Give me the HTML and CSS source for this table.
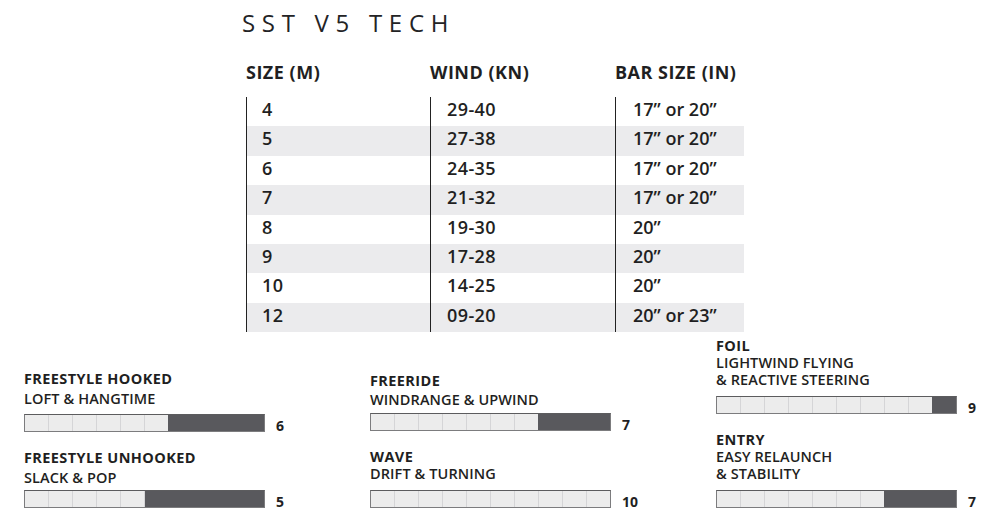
FILE: index.html
```html
<!DOCTYPE html>
<html>
<head>
<meta charset="utf-8">
<link rel="stylesheet" href="styles.css">
</head>
<body>
<div class="page">
  <h1 class="title">SST V5 TECH</h1>
  <div class="table">
    <div class="thead">
      <div class="th">SIZE (M)</div>
      <div class="th">WIND (KN)</div>
      <div class="th">BAR SIZE (IN)</div>
    </div>
    <div class="tbody">
      <div class="tr"><div class="td c1">4</div><div class="td c2">29-40</div><div class="td c3">17” or 20”</div></div>
      <div class="tr alt"><div class="td c1">5</div><div class="td c2">27-38</div><div class="td c3">17” or 20”</div></div>
      <div class="tr"><div class="td c1">6</div><div class="td c2">24-35</div><div class="td c3">17” or 20”</div></div>
      <div class="tr alt"><div class="td c1">7</div><div class="td c2">21-32</div><div class="td c3">17” or 20”</div></div>
      <div class="tr"><div class="td c1">8</div><div class="td c2">19-30</div><div class="td c3">20”</div></div>
      <div class="tr alt"><div class="td c1">9</div><div class="td c2">17-28</div><div class="td c3">20”</div></div>
      <div class="tr"><div class="td c1">10</div><div class="td c2">14-25</div><div class="td c3">20”</div></div>
      <div class="tr alt"><div class="td c1">12</div><div class="td c2">09-20</div><div class="td c3">20” or 23”</div></div>
    </div>
  </div>

  <div class="ratings">
    <div class="col">
      <div class="item airy">
        <div class="name">FREESTYLE HOOKED</div>
        <div class="desc">LOFT &amp; HANGTIME</div>
        <div class="meter"><div class="bar"><div class="fill"></div><div class="rest" style="width:40%"></div></div><span class="val">6</span></div>
      </div>
      <div class="item airy tight">
        <div class="name">FREESTYLE UNHOOKED</div>
        <div class="desc">SLACK &amp; POP</div>
        <div class="meter"><div class="bar"><div class="fill"></div><div class="rest" style="width:50%"></div></div><span class="val">5</span></div>
      </div>
    </div>
    <div class="col">
      <div class="item loose">
        <div class="name">FREERIDE</div>
        <div class="desc">WINDRANGE &amp; UPWIND</div>
        <div class="meter"><div class="bar"><div class="fill"></div><div class="rest" style="width:30%"></div></div><span class="val">7</span></div>
      </div>
      <div class="item">
        <div class="name">WAVE</div>
        <div class="desc">DRIFT &amp; TURNING</div>
        <div class="meter"><div class="bar"><div class="fill"></div><div class="rest" style="width:0%"></div></div><span class="val">10</span></div>
      </div>
    </div>
    <div class="col col-last">
      <div class="item">
        <div class="name">FOIL</div>
        <div class="desc">LIGHTWIND FLYING<br>&amp; REACTIVE STEERING</div>
        <div class="meter"><div class="bar"><div class="fill"></div><div class="rest" style="width:10%"></div></div><span class="val">9</span></div>
      </div>
      <div class="item">
        <div class="name">ENTRY</div>
        <div class="desc">EASY RELAUNCH<br>&amp; STABILITY</div>
        <div class="meter"><div class="bar"><div class="fill"></div><div class="rest" style="width:30%"></div></div><span class="val">7</span></div>
      </div>
    </div>
  </div>
</div>
</body>
</html>
```

FILE: styles.css
```css
* { box-sizing: border-box; }
html, body { margin: 0; padding: 0; background: #fff; }
body {
  font-family: "Open Sans", "Noto Sans", "Liberation Sans", sans-serif;
  color: #1f1f22;
  width: 1000px;
  height: 521px;
  overflow: hidden;
}
.page { padding-top: 8px; }
.title {
  margin: 0 0 0 242px;
  font-weight: 400;
  font-size: 24px;
  line-height: 30px;
  letter-spacing: 6.7px;
  color: #232325;
}
.table {
  margin: 24px 0 0 246px;
  width: 498px;
}
.thead {
  display: grid;
  grid-template-columns: 184px 185px 129px;
  height: 35px;
}
.th {
  font-weight: 700;
  font-size: 18px;
  line-height: 20px;
  letter-spacing: 0.5px;
}
.tbody { display: flex; flex-direction: column; }
.tr {
  display: grid;
  grid-template-columns: 184px 185px 129px;
  height: 29.4px;
}
.tr.alt { background: #ebebed; }
.td {
  border-left: 1px solid #222;
  font-size: 18px;
  font-weight: 600;
  line-height: 24px;
  letter-spacing: 0.4px;
  padding-left: 15px;
}
.td.c2 { padding-left: 16px; }
.td.c3 { padding-left: 17px; letter-spacing: 0; }

.ratings {
  display: flex;
  align-items: flex-end;
  margin: 5px 0 0 24px;
}
.col {
  flex: none;
  width: 346px;
  display: flex;
  flex-direction: column;
  gap: 17px;
}
.col-last { width: auto; }
.name {
  font-weight: 700;
  font-size: 14.5px;
  line-height: 17px;
  letter-spacing: 0.4px;
}
.desc {
  font-weight: 600;
  font-size: 14.5px;
  line-height: 17px;
  letter-spacing: 0.1px;
}
.meter {
  display: flex;
  align-items: flex-end;
  margin-top: 8px;
}
.airy .desc { margin-top: 3px; }
.airy .meter { margin-top: 7px; }
.airy.tight .meter { margin-top: 4px; }
.loose .desc { margin-top: 2px; }
.loose .meter { margin-top: 5px; }
.bar {
  width: 241px;
  height: 18px;
  display: flex;
  border: 1px solid #7c7c7e;
  border-top-color: #5c5c5e;
  background-color: #ececec;
  background-image: repeating-linear-gradient(to right, transparent 0, transparent 23px, #d5d5d7 23px, #d5d5d7 24px);
}
.fill { flex: 1; }
.rest { background: #59595d; }
.val {
  margin-left: 11px;
  font-weight: 700;
  font-size: 14px;
  line-height: 14px;
  margin-bottom: -1px;
}
```
